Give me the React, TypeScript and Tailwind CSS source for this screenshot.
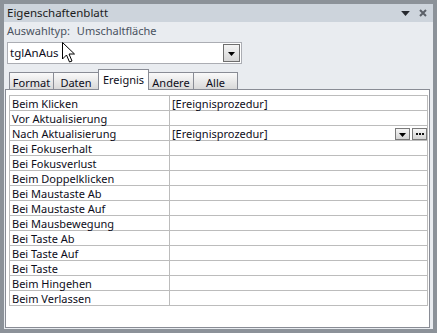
import React from 'react';

const rows: { name: string; value?: string; buttons?: boolean }[] = [
  { name: 'Beim Klicken', value: '[Ereignisprozedur]' },
  { name: 'Vor Aktualisierung' },
  { name: 'Nach Aktualisierung', value: '[Ereignisprozedur]', buttons: true },
  { name: 'Bei Fokuserhalt' },
  { name: 'Bei Fokusverlust' },
  { name: 'Beim Doppelklicken' },
  { name: 'Bei Maustaste Ab' },
  { name: 'Bei Maustaste Auf' },
  { name: 'Bei Mausbewegung' },
  { name: 'Bei Taste Ab' },
  { name: 'Bei Taste Auf' },
  { name: 'Bei Taste' },
  { name: 'Beim Hingehen' },
  { name: 'Beim Verlassen' },
];

const tabs = [
  { label: 'Format', w: 'w-[45px]' },
  { label: 'Daten', w: 'w-[46px]' },
  { label: 'Ereignis', w: 'w-[51px]', active: true },
  { label: 'Andere', w: 'w-[46px]' },
  { label: 'Alle', w: 'w-[45px]' },
];

function DownTriangle({ className }: { className?: string }) {
  return (
    <svg viewBox="0 0 7 4" className={className}>
      <path d="M0 0h7L3.5 4z" fill="currentColor" />
    </svg>
  );
}

export default function App() {
  return (
    <div
      className="relative w-[437px] h-[333px] border-4 border-[#8c9299] bg-[#e9ecf0] flex flex-col text-[11px] leading-none text-[#0d0d1a]"
      style={{ fontFamily: '"Segoe UI", "Noto Sans", sans-serif' }}
    >
      {/* title bar */}
      <div className="h-[18px] bg-[#cdd4dc] flex items-center pl-[3px] pr-[6px]">
        <span className="flex-1 text-[#1b1b1b] text-[11.5px]">Eigenschaftenblatt</span>
        <DownTriangle className="w-[9px] h-[5px] text-[#26292e] mr-[9px] mt-[1px]" />
        <svg viewBox="0 0 8 8" className="w-[8px] h-[8px]">
          <path d="M1 1L7 7M7 1L1 7" stroke="#5b6068" strokeWidth="2" />
        </svg>
      </div>

      {/* selection type */}
      <div className="h-[16px] flex items-center pl-[3px] text-[11px] text-[#4a5260]">
        <span>Auswahltyp:</span>
        <span className="ml-[7px]">Umschaltfläche</span>
      </div>

      {/* combo box */}
      <div className="mt-[4px] ml-[3px] w-[235px] h-[22px] border border-[#abadb3] bg-white flex items-center pl-[2px] pr-[1px]">
        <span className="flex-1 text-[11.5px]">tglAnAus</span>
        <div className="w-[17px] h-[18px] border border-[#6e6e6e] bg-gradient-to-b from-[#f4f4f4] to-[#d6d6d6] flex items-center justify-center">
          <DownTriangle className="w-[7px] h-[4px] text-black mt-[1px]" />
        </div>
      </div>

      {/* tabs */}
      <div className="mt-[5px] ml-[5px] h-[20px] flex items-end relative z-10">
        {tabs.map((t) =>
          t.active ? (
            <div
              key={t.label}
              className={`${t.w} h-[21px] -mb-px -ml-px border border-b-0 border-[#898c95] bg-white flex justify-center pt-[4px]`}
            >
              {t.label}
            </div>
          ) : (
            <div
              key={t.label}
              className={`${t.w} h-[17px] -ml-px first:ml-0 border border-b-0 border-[#898c95] bg-gradient-to-b from-[#fafafa] to-[#d9d9d9] flex justify-center pt-[4px]`}
            >
              {t.label}
            </div>
          )
        )}
      </div>

      {/* panel */}
      <div className="flex-1 ml-[1px] mr-[3px] mb-[1px] border border-[#898c95] bg-white pt-[5px] pl-[3px] pr-[1px]">
        <div className="border-l border-r border-t border-[#bcbcbc]">
          {rows.map((r) => (
            <div key={r.name} className="h-[15px] border-b border-[#bcbcbc] flex">
              <div className="w-[160px] border-r border-[#bcbcbc] pl-[2px] flex items-center">{r.name}</div>
              <div className="flex-1 pl-[2px] flex items-center">
                <span className="flex-1">{r.value}</span>
                {r.buttons && (
                  <div className="self-end flex gap-[2px]">
                    <div className="w-[15px] h-[12px] border border-[#7a7a7a] bg-gradient-to-b from-[#f6f6f6] to-[#d4d4d4] flex items-end justify-center pb-[2px]">
                      <DownTriangle className="w-[7px] h-[4px] text-black" />
                    </div>
                    <div className="w-[15px] h-[12px] border border-[#7a7a7a] bg-gradient-to-b from-[#f6f6f6] to-[#d4d4d4] flex items-center justify-center">
                      <svg viewBox="0 0 8 2" className="w-[8px] h-[2px]">
                        <path d="M0 0h2v2H0zM3 0h2v2H3zM6 0h2v2H6z" fill="#111" />
                      </svg>
                    </div>
                  </div>
                )}
              </div>
            </div>
          ))}
        </div>
      </div>

      {/* mouse cursor */}
      <svg viewBox="0 0 13 21" className="absolute left-[58px] top-[38px] w-[13px] h-[21px] z-20">
        <path d="M0.5 0.5V17L4.5 13L7.5 20L10 19L7 12H12.5Z" fill="white" stroke="black" strokeWidth="1" strokeLinejoin="miter" />
      </svg>
    </div>
  );
}
